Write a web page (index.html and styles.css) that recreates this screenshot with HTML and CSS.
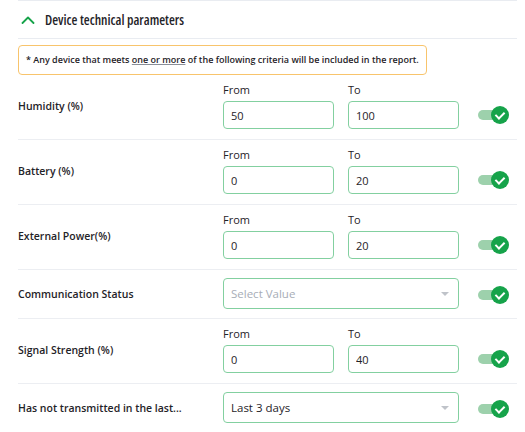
FILE: index.html
```html
<!DOCTYPE html>
<html lang="en">
<head>
  <meta charset="UTF-8">
  <title>Device technical parameters</title>
  <link rel="stylesheet" href="styles.css">
</head>
<body>
  <div class="panel">
    <div class="section-head">
      <svg class="chevron" width="14" height="8" viewBox="0 0 14 8">
        <path d="M1.5 7 L7 1.5 L12.5 7" fill="none" stroke="#16a34a" stroke-width="1.8" stroke-linecap="round" stroke-linejoin="round"/>
      </svg>
      <span>Device technical parameters</span>
    </div>

    <div class="notice">* Any device that meets <u>one or more</u> of the following criteria will be included in the report.</div>

    <div class="param-row">
      <div class="param-label">Humidity (%)</div>
      <div class="range">
        <label>From<input type="text" value="50"></label>
        <label>To<input type="text" value="100"></label>
      </div>
      <div class="toggle"><span class="knob"></span></div>
    </div>

    <div class="param-row">
      <div class="param-label">Battery (%)</div>
      <div class="range">
        <label>From<input type="text" value="0"></label>
        <label>To<input type="text" value="20"></label>
      </div>
      <div class="toggle"><span class="knob"></span></div>
    </div>

    <div class="param-row">
      <div class="param-label">External Power(%)</div>
      <div class="range">
        <label>From<input type="text" value="0"></label>
        <label>To<input type="text" value="20"></label>
      </div>
      <div class="toggle"><span class="knob"></span></div>
    </div>

    <div class="param-row select-row">
      <div class="param-label">Communication Status</div>
      <div class="select placeholder">Select Value<span class="caret"></span></div>
      <div class="toggle"><span class="knob"></span></div>
    </div>

    <div class="param-row">
      <div class="param-label">Signal Strength (%)</div>
      <div class="range">
        <label>From<input type="text" value="0"></label>
        <label>To<input type="text" value="40"></label>
      </div>
      <div class="toggle"><span class="knob"></span></div>
    </div>

    <div class="param-row select-row last">
      <div class="param-label">Has not transmitted in the last...</div>
      <div class="select">Last 3 days<span class="caret"></span></div>
      <div class="toggle"><span class="knob"></span></div>
    </div>
  </div>
</body>
</html>
```

FILE: styles.css
```css
body {
  margin: 0;
  font-family: "Segoe UI", "Open Sans", sans-serif;
  color: #1f2328;
  background: #fff;
}

.panel {
  padding: 0 8px 0 18px;
}

.section-head {
  display: flex;
  align-items: center;
  height: 37px;
  border-top: 1px solid #e9ecf1;
  border-bottom: 1px solid #e9ecf1;
  font-size: 13.5px;
  font-weight: 600;
  font-stretch: 75%;
}

.chevron {
  margin: 0 10px 0 3px;
}

.notice {
  display: inline-block;
  margin-top: 6px;
  padding: 7px 7px;
  border: 1px solid #f8c46c;
  border-radius: 4px;
  font-size: 9px;
  font-weight: 600;
  line-height: 14px;
}

.notice u {
  text-decoration-color: #8a8f98;
}

.param-row {
  display: flex;
  align-items: center;
  padding: 8px 0 10px;
  border-bottom: 1px solid #eceef2;
}

.param-row.last {
  border-bottom: none;
}

.select-row {
  padding: 8px 0 9px;
}

.param-label {
  width: 205px;
  flex-shrink: 0;
  font-size: 10.5px;
  font-weight: 600;
}

.range {
  display: grid;
  grid-template-columns: 111px 111px;
  gap: 14px;
}

.range label {
  display: flex;
  flex-direction: column;
  gap: 4px;
  font-size: 11px;
  line-height: 14px;
}

.range input {
  box-sizing: border-box;
  width: 111px;
  height: 28px;
  padding: 0 7px;
  border: 1.5px solid #83d0a0;
  border-radius: 4px;
  font-family: inherit;
  font-size: 11px;
  color: #1f2328;
  outline: none;
}

.select {
  box-sizing: border-box;
  position: relative;
  display: flex;
  align-items: center;
  width: 236px;
  height: 31px;
  padding: 0 7px;
  border: 1.5px solid #83d0a0;
  border-radius: 4px;
  font-size: 11.5px;
}

.select.placeholder {
  color: #a7adb7;
}

.caret {
  position: absolute;
  right: 9px;
  top: 13px;
  border-left: 4px solid transparent;
  border-right: 4px solid transparent;
  border-top: 4px solid #bfc3c9;
}

.toggle {
  position: relative;
  width: 26px;
  height: 10px;
  margin-left: 19px;
  margin-top: 2px;
  border-radius: 5px;
  background: #9dd1ac;
}

.param-row .range + .toggle {
  margin-top: 18px;
}

.knob {
  position: absolute;
  right: -5px;
  top: -4px;
  width: 18px;
  height: 18px;
  border-radius: 50%;
  background: #16a34a;
}

.knob::after {
  content: '';
  position: absolute;
  left: 5.5px;
  top: 4px;
  width: 4px;
  height: 7px;
  border-right: 2px solid #fff;
  border-bottom: 2px solid #fff;
  transform: rotate(45deg);
}
```
